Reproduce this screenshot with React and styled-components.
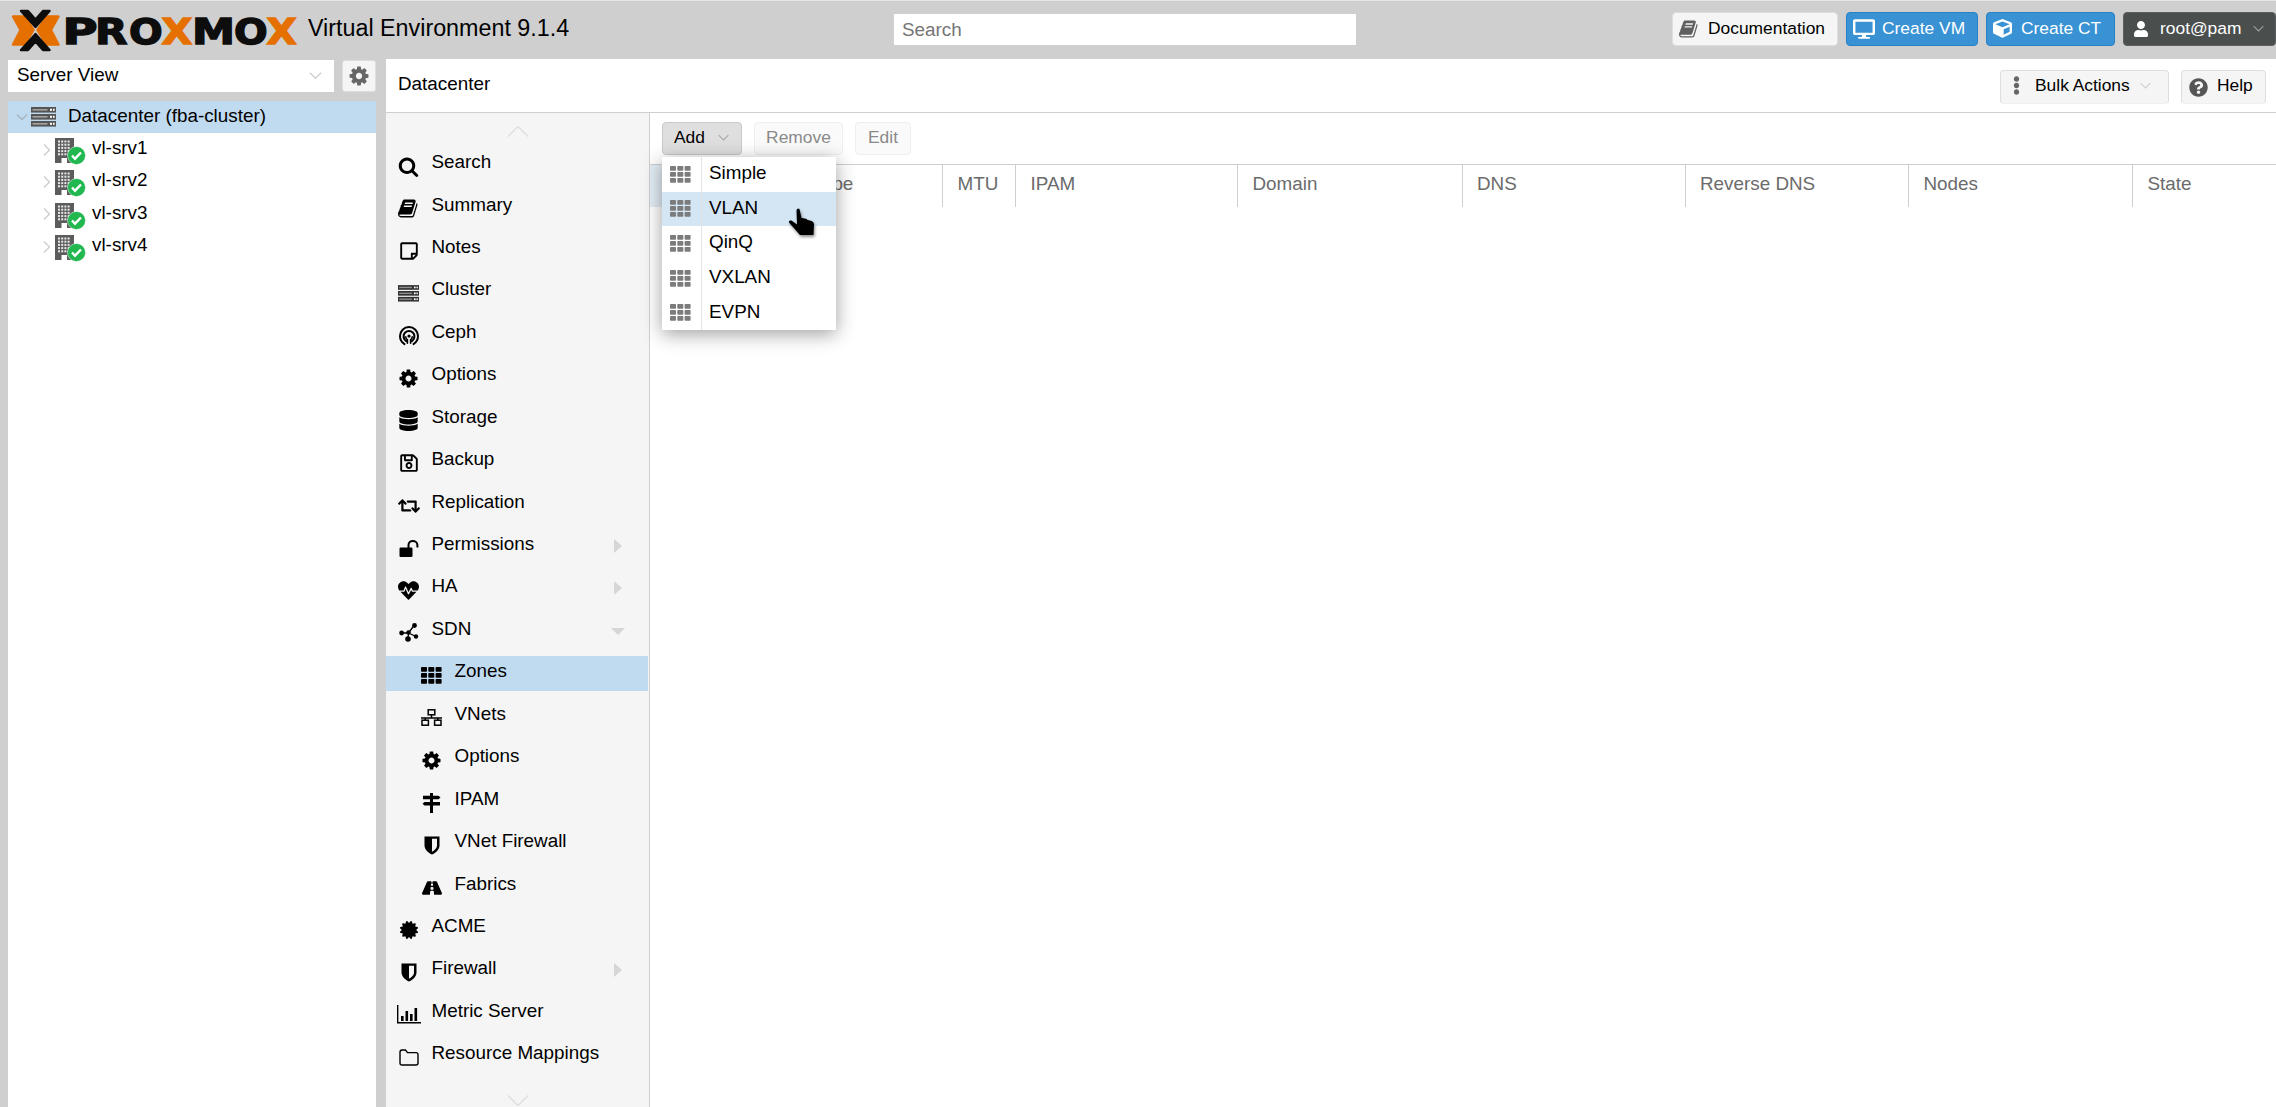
import React from "react";
import styled, { createGlobalStyle } from "styled-components";
import {
  FaRegStickyNote,
  FaDatabase,
  FaRegSave,
  FaRetweet,
  FaHeartbeat,
  FaRoad,
  FaCertificate,
  FaDesktop,
  FaCube,
  FaUser,
  FaQuestionCircle,
  FaEllipsisV,
} from "react-icons/fa";

const GlobalStyle = createGlobalStyle`
  html, body {
    margin: 0;
    padding: 0;
    height: 100%;
    overflow: hidden;
  }
  body {
    font-family: "Liberation Sans", Arial, sans-serif;
    font-size: 18.85px;
    color: #000;
  }
`;

const Page = styled.div`
  width: 100vw;
  height: 100vh;
  background: #cfcfcf;
  display: flex;
  flex-direction: column;
  overflow: hidden;
`;

/* top bar */
const TopBar = styled.header`
  height: 59px;
  flex: none;
  box-sizing: border-box;
  border-top: 1px solid #e6e6e6;
  display: flex;
  align-items: center;
  position: relative;
`;
const LogoSvg = styled.svg`
  width: 300px;
  height: 58px;
  flex: none;
  margin-top: -1px;
`;
const Title = styled.div`
  font-size: 23.3px;
  margin-left: 8px;
  width: 586px;
  flex: none;
  margin-top: -3px;
`;
const SearchBox = styled.div`
  width: 462px;
  height: 31px;
  flex: none;
  background: #fff;
  box-sizing: border-box;
  padding: 0 8px 0 8px;
  display: flex;
  align-items: center;
  color: #757575;
  font-size: 18.85px;
  margin-top: -2px;
  span {
    margin-top: 1px;
  }
`;
const TopActions = styled.div`
  margin-left: auto;
  display: flex;
  align-items: center;
  gap: 8px;
  margin-top: -3px;
`;
const TopButton = styled.div`
  height: 34px;
  box-sizing: border-box;
  width: ${(p) => p.$w}px;
  border-radius: 4px;
  border: 1px solid ${(p) => (p.$tone === "blue" ? "#2a80c4" : p.$tone === "dark" ? "#5b5f5f" : "#dedede")};
  background: ${(p) => (p.$tone === "blue" ? "#3892d4" : p.$tone === "dark" ? "#4a4f4e" : "#f5f5f5")};
  color: ${(p) => (p.$tone === "blue" || p.$tone === "dark" ? "#fff" : "#000")};
  font-size: 17.4px;
  display: flex;
  align-items: center;
  gap: ${(p) => p.$gap ?? 9}px;
  padding-left: 6px;
  white-space: nowrap;
  svg {
    flex: none;
  }
`;

/* main columns */
const Body = styled.div`
  flex: 1;
  min-height: 0;
  display: flex;
  padding-left: 8px;
  gap: 10px;
`;
const Sidebar = styled.aside`
  width: 368px;
  flex: none;
  display: flex;
  flex-direction: column;
  padding-top: 1px;
  gap: 9px;
`;
const ViewRow = styled.div`
  display: flex;
  gap: 8px;
  height: 32px;
  flex: none;
`;
const ViewSelect = styled.div`
  flex: 1;
  background: #fff;
  display: flex;
  align-items: center;
  justify-content: space-between;
  padding: 0 11px 2px 9px;
  font-size: 18.85px;
`;
const GearButton = styled.div`
  width: 34px;
  box-sizing: border-box;
  background: #f5f5f5;
  border: 1px solid #dedede;
  border-radius: 3px;
  display: flex;
  align-items: center;
  justify-content: center;
  color: #666;
`;
const Tree = styled.div`
  flex: 1;
  background: #fff;
`;
const TreeRow = styled.div`
  height: 32.35px;
  display: flex;
  align-items: center;
  padding-left: ${(p) => (p.$root ? 8 : 33)}px;
  background: ${(p) => (p.$active ? "#c0dbf0" : "transparent")};
  white-space: nowrap;
`;
const TreeLabel = styled.span`
  margin-top: -3px;
`;
const TreeChevron = styled.svg`
  width: 12px;
  height: 12px;
  flex: none;
  color: ${(p) => (p.$root ? "#a3b4c1" : "#cdcdcd")};
`;
const TreeIconBox = styled.span`
  position: relative;
  display: block;
  flex: none;
  width: ${(p) => (p.$root ? 25 : 20)}px;
  margin: ${(p) => (p.$root ? "0 12px 0 3px" : "2px 17px 0 2px")};
  line-height: 0;
`;
const StatusBadge = styled.svg`
  position: absolute;
  left: 12px;
  top: 8px;
  width: 19px;
  height: 19px;
`;

const Main = styled.main`
  flex: 1;
  min-width: 0;
  background: #fff;
  display: flex;
  flex-direction: column;
`;
const PanelHeader = styled.div`
  height: 54px;
  flex: none;
  box-sizing: border-box;
  border-bottom: 1px solid #cfcfcf;
  display: flex;
  align-items: center;
  padding: 0 10px 0 12px;
`;
const HeaderTitle = styled.div`
  flex: 1;
  margin-top: -4px;
`;
const HeaderButton = styled.div`
  height: 34px;
  width: ${(p) => p.$w}px;
  box-sizing: border-box;
  background: #f5f5f5;
  border: 1px solid #dedede;
  border-bottom-color: #f0f0f0;
  border-radius: 4px;
  margin-left: ${(p) => p.$ml ?? 0}px;
  margin-top: 2px;
  font-size: 17.4px;
  display: flex;
  align-items: center;
  padding: 0 0 3px ${(p) => p.$pl}px;
  gap: ${(p) => p.$gap}px;
  white-space: nowrap;
`;

const Columns = styled.div`
  flex: 1;
  min-height: 0;
  display: flex;
`;
const Nav = styled.nav`
  width: 264px;
  flex: none;
  box-sizing: border-box;
  background: #f5f5f5;
  border-right: 1px solid #cfcfcf;
  padding-top: 13px;
  overflow: hidden;
  display: flex;
  flex-direction: column;
  position: relative;
`;
const NavScroll = styled.svg`
  width: 22px;
  height: 11px;
  flex: none;
  align-self: center;
  color: #dedede;
  margin: ${(p) => p.$m};
`;
const NavItem = styled.div`
  height: 35px;
  flex: none;
  margin-bottom: 7.45px;
  margin-right: 1px;
  display: flex;
  align-items: center;
  padding-left: ${(p) => (p.$sub ? 34 : 11)}px;
  background: ${(p) => (p.$active ? "#c0dbf0" : "transparent")};
  white-space: nowrap;
`;
const NavIcon = styled.span`
  width: 27px;
  height: 24px;
  flex: none;
  margin-top: 4px;
  margin-right: 9.5px;
  display: flex;
  align-items: center;
  justify-content: center;
  color: #000;
  margin-left: -2px;
`;
const NavLabel = styled.span`
  flex: 1;
  margin-top: -4px;
`;
const Expander = styled.svg`
  width: 13px;
  height: 16px;
  flex: none;
  margin-right: 23px;
  color: #d6d6d6;
`;

const Content = styled.section`
  flex: 1;
  min-width: 0;
  display: flex;
  flex-direction: column;
  position: relative;
`;
const Toolbar = styled.div`
  height: 52px;
  flex: none;
  box-sizing: border-box;
  border-bottom: 1px solid #cfcfcf;
  padding: 9px 12px 0;
  display: flex;
  gap: 12px;
`;
const ToolButton = styled.div`
  height: 33px;
  box-sizing: border-box;
  width: ${(p) => p.$w}px;
  border-radius: 4px;
  border: 1px solid ${(p) => (p.$pressed ? "#c9c9c9" : "#eeeeee")};
  background: ${(p) => (p.$pressed ? "#dfdfdf" : "#fafafa")};
  color: ${(p) => (p.$pressed ? "#000" : "#8a8a8a")};
  font-size: 17.4px;
  display: flex;
  align-items: center;
  justify-content: ${(p) => (p.$pressed ? "flex-start" : "center")};
  padding: 0 0 2px ${(p) => (p.$pressed ? 11 : 0)}px;
  gap: 12px;
`;
const TableHead = styled.div`
  display: grid;
  grid-template-columns: 147px 145px 73px 222px 224.5px 223px 223.5px 224px 1fr;
  height: 42px;
  flex: none;
`;
const HeadCell = styled.div`
  box-sizing: border-box;
  border-left: ${(p) => (p.$first ? "none" : "1px solid #cfcfcf")};
  background: ${(p) => (p.$first ? "#e4eef6" : "#fff")};
  color: #6b6b6b;
  padding-left: 14.5px;
  display: flex;
  align-items: center;
  padding-bottom: 5px;
`;

/* dropdown + pointer, both float over the grid */
const Menu = styled.div`
  position: absolute;
  left: 12px;
  top: 44px;
  width: 174px;
  background: #fff;
  box-shadow: 0 4px 18px rgba(0, 0, 0, 0.38);
  display: flex;
  flex-direction: column;
`;
const MenuItem = styled.div`
  height: 34.6px;
  display: flex;
  align-items: center;
  background: ${(p) => (p.$hover ? "#d4e6f4" : "transparent")};
`;
const MenuIcon = styled.span`
  width: 40px;
  height: 100%;
  box-sizing: border-box;
  border-right: 1px solid #e4e4e4;
  flex: none;
  display: flex;
  align-items: center;
  justify-content: center;
  padding-right: 2px;
`;
const MenuLabel = styled.span`
  padding-left: 7px;
  margin-top: -2px;
`;
const Pointer = styled.svg`
  position: absolute;
  left: 137px;
  top: 93px;
  width: 30px;
  height: 33px;
  filter: drop-shadow(1px 2px 1.5px rgba(0, 0, 0, 0.45));
`;

/* drawn icons */
const Fa4 = ({ d, size = 19, color = "currentColor" }) => (
  <svg width={size} height={size} viewBox="0 0 1792 1792" fill={color}>
    <path d={d} />
  </svg>
);
const SEARCH =
  "M1216 832q0-185-131.5-316.5t-316.5-131.5-316.5 131.5-131.5 316.5 131.5 316.5 316.5 131.5 316.5-131.5 131.5-316.5zm512 832q0 52-38 90t-90 38q-54 0-90-38l-343-342q-179 124-399 124-143 0-273.5-55.5t-225-150-150-225-55.5-273.5 55.5-273.5 150-225 225-150 273.5-55.5 273.5 55.5 225 150 150 225 55.5 273.5q0 220-124 399l343 343q37 37 37 90z";
const GEAR =
  "M1152 896q0-106-75-181t-181-75-181 75-75 181 75 181 181 75 181-75 75-181zm512-109v222q0 12-8 23t-20 13l-185 28q-19 54-39 91 35 50 107 138 10 12 10 25t-9 23q-27 37-99 108t-94 71q-12 0-26-9l-138-108q-44 23-91 38-16 136-29 186-7 28-36 28h-222q-14 0-24.5-8.5t-11.5-21.5l-28-184q-49-16-90-37l-141 107q-10 9-25 9-14 0-25-11-126-114-165-168-7-10-7-23 0-12 8-23 15-21 51-66.5t54-70.5q-27-50-41-99l-183-27q-13-2-21-12.5t-8-23.5v-222q0-12 8-23t19-13l186-28q14-46 39-92-40-57-107-138-10-12-10-24 0-10 9-23 26-36 98.5-107.5t94.5-71.5q13 0 26 10l138 107q44-23 91-38 16-136 29-186 7-28 36-28h222q14 0 24.5 8.5t11.5 21.5l28 184q49 16 90 37l142-107q9-9 24-9 13 0 25 10 129 119 165 170 7 8 7 22 0 12-8 23-15 21-51 66.5t-54 70.5q26 50 41 98l183 28q13 2 21 12.5t8 23.5z";
const BOOK =
  "M1639 478q40 57 18 129l-275 906q-19 64-76.5 107.5t-122.5 43.5h-923q-77 0-148.5-53.5t-99.5-131.5q-24-67-2-127 0-4 3-27t4-37q1-8-3-21.5t-3-19.5q2-11 8-21t16.5-23.5 16.5-23.5q23-38 45-91.5t30-91.5q3-10 .5-30t-.5-28q3-11 17-28t17-23q21-36 42-92t25-90q1-9-2.5-32t.5-28q4-13 22-30.5t22-22.5q19-26 42.5-84.5t27.5-96.5q1-8-3-25.5t-2-26.5q2-8 9-18t18-23 17-21q8-12 16.5-30.5t15-35 16-36 19.5-32 26.5-23.5 36-11.5 47.5 5.5l-1 3q38-9 51-9h761q74 0 114 56t18 130l-274 906q-36 119-71.5 153.5t-128.5 34.5h-869q-27 0-38 15-11 16-1 43 24 70 144 70h923q29 0 56-15.5t35-41.5l300-987q7-22 5-57 38 15 59 43zm-1064 2q-4 13 2 22.5t20 9.5h608q13 0 25.5-9.5t16.5-22.5l21-64q4-13-2-22.5t-20-9.5h-608q-13 0-25.5 9.5t-16.5 22.5zm-83 256q-4 13 2 22.5t20 9.5h608q13 0 25.5-9.5t16.5-22.5l21-64q4-13-2-22.5t-20-9.5h-608q-13 0-25.5 9.5t-16.5 22.5z";

const ChevronDown = ({ size = 16, color = "#cfcfcf" }) => (
  <svg width={size} height={size} viewBox="0 0 16 16" fill="none" stroke={color} strokeWidth="1.4">
    <path d="M2 5l6 6 6-6" />
  </svg>
);

const ThGrid = ({ color = "#000", w = 21, h = 17 }) => (
  <svg width={w} height={h} viewBox="0 0 21 17" fill={color}>
    {[0, 1, 2].flatMap((r) =>
      [0, 1, 2].map((c) => <rect key={`${r}${c}`} x={c * 7.3} y={r * 6} width="6" height="4.8" rx="0.8" />)
    )}
  </svg>
);

const ServerStack = ({ w = 25, h = 20, color = "#555" }) => (
  <svg width={w} height={h} viewBox="0 0 25 20">
    {[0, 7, 14].map((y) => (
      <g key={y}>
        <rect y={y} width="25" height="5.6" fill={color} />
        <rect x="1.5" y={y + 2} width="15" height="1.6" fill="#fff" opacity="0.45" />
        <rect x="19" y={y + 1.8} width="2" height="2" fill="#fff" />
        <rect x="22" y={y + 1.8} width="1.6" height="2" fill="#fff" />
      </g>
    ))}
  </svg>
);

const Building = () => (
  <svg width="20" height="25" viewBox="0 0 20 25">
    <rect width="19" height="25" fill="#5c5c5c" />
    {[0, 1, 2, 3, 4].flatMap((r) =>
      [0, 1, 2, 3].map((c) => (
        <rect key={`${r}${c}`} x={3 + c * 3.2} y={2.5 + r * 3.2} width="2" height="2" fill="#e8e8e8" />
      ))
    )}
    <rect x="6.5" y="20" width="5.5" height="5" fill="#fff" />
  </svg>
);

const CephIcon = () => (
  <svg width="20" height="21" viewBox="0 0 20 20" fill="none" stroke="#000" strokeWidth="2" strokeLinecap="round">
    <path d="M5.5 18.6C2.7 17 1 14 1 10.6 1 5.6 5 1.6 10 1.6s9 4 9 9c0 3.4-1.7 6.4-4.5 8" />
    <path d="M7.2 15.6C5.6 14.6 4.6 12.8 4.6 10.8c0-3 2.4-5.4 5.4-5.4s5.4 2.4 5.4 5.4c0 2-1 3.8-2.6 4.8" />
    <path d="M8.4 17.8v-3.6c-1-.5-1.6-1.6-1.6-2.8" strokeWidth="1.6" />
    <path d="M11.6 17.8v-3.6c1-.5 1.6-1.6 1.6-2.8" strokeWidth="1.6" />
    <circle cx="10" cy="10.6" r="1.6" fill="#000" stroke="none" />
  </svg>
);

const SdnIcon = () => (
  <svg width="20" height="19" viewBox="0 0 20 19" fill="#000" stroke="#000">
    <path d="M9.5 10L15 2.5M9.5 10L2.5 10M9.5 10L9 16M9.5 10L17 13.5" strokeWidth="1.3" />
    <circle cx="15.5" cy="2.5" r="2.4" stroke="none" />
    <circle cx="2.6" cy="10" r="2.4" stroke="none" />
    <circle cx="9" cy="16" r="2.8" stroke="none" />
    <circle cx="17" cy="13.5" r="2.2" stroke="none" />
    <circle cx="9.5" cy="9.5" r="2.2" stroke="none" />
  </svg>
);

const ShieldIcon = () => (
  <svg width="16" height="19" viewBox="0 0 16 19">
    <path d="M0.5 0.5H15.5V9.5C15.5 14 11 17 8 18.6 5 17 0.5 14 0.5 9.5Z" fill="#000" />
    <path d="M8 2.8H13V9.5C13 12.4 10 14.5 8 15.7Z" fill="#f5f5f5" />
  </svg>
);

const UnlockIcon = () => (
  <svg width="20" height="17" viewBox="0 0 20 17">
    <rect x="0.5" y="7.5" width="13" height="9.5" rx="1.2" fill="#000" />
    <path d="M9.5 8V5C9.5 2.6 11.5 1 13.8 1S18.4 2.6 18.4 5V7.5" fill="none" stroke="#000" strokeWidth="2" />
  </svg>
);

const NetTreeIcon = () => (
  <svg width="21" height="17" viewBox="0 0 21 17" fill="none" stroke="#000" strokeWidth="1.5">
    <rect x="7.2" y="0.8" width="6.6" height="5" />
    <path d="M10.5 6v3M0 9H21" />
    <rect x="1" y="11.2" width="6.4" height="5" />
    <rect x="13.6" y="11.2" width="6.4" height="5" />
    <path d="M4.2 9v2.2M16.8 9v2.2" />
  </svg>
);

const SignPostIcon = () => (
  <svg width="19" height="20" viewBox="0 0 19 20" fill="#000">
    <rect x="8" y="0" width="3" height="20" />
    <path d="M1 2.8H16.5L18.5 4.5 16.5 6.2H1Z" />
    <path d="M18 9H2.5L0.5 10.7 2.5 12.4H18Z" />
  </svg>
);

const FolderIcon = () => (
  <svg width="20" height="17" viewBox="0 0 20 17" fill="none" stroke="#000" strokeWidth="1.4">
    <path d="M1 3.2Q1 1 3 1H6.5L8.5 3.6H17Q19 3.6 19 5.6V14Q19 16 17 16H3Q1 16 1 14Z" />
  </svg>
);

const ServersIcon = () => <ServerStack w={21} h={17} color="#333" />;

const MetricIcon = () => (
  <svg width="24" height="19" viewBox="0 0 24 19" fill="#000">
    <path d="M0 0h1.4v17H24v1.4H0z" />
    <rect x="4" y="11" width="2.6" height="5" />
    <rect x="8.5" y="6" width="2.6" height="10" />
    <rect x="13" y="9" width="2.6" height="7" />
    <rect x="17.5" y="3" width="2.6" height="13" />
  </svg>
);

/* wordmark letters stay real text, scaled to the logo's wide proportions */
const LETTERS = [
  ["P", 62.6, 1.33, "#0d0d0d"],
  ["R", 95, 1.17, "#0d0d0d"],
  ["O", 129, 1.1, "#0d0d0d"],
  ["X", 161.5, 1.11, "#e57000"],
  ["M", 192, 1.2, "#0d0d0d"],
  ["O", 234, 1.1, "#0d0d0d"],
  ["X", 266.5, 1.09, "#e57000"],
];

const Logo = () => (
  <LogoSvg viewBox="0 0 300 58">
    <g strokeLinejoin="round" strokeWidth="2.4">
      <path d="M13 15.5H25L33.5 29 25 43.5H13L20.5 29Z" fill="#e57000" stroke="#e57000" />
      <path d="M58.5 15.5H46.5L37.5 29 46.5 43.5H58.5L51 29Z" fill="#e57000" stroke="#e57000" />
      <path d="M21 10H28L35.5 18.5 43 10H49.5L35.5 26Z" fill="#0d0d0d" stroke="#0d0d0d" />
      <path d="M21 49H28L35.5 40.5 43 49H49.5L35.5 33Z" fill="#0d0d0d" stroke="#0d0d0d" />
    </g>
    {LETTERS.map(([ch, x, sx, color], i) => (
      <text
        key={i}
        transform={`translate(${x} 42.5) scale(${sx} 1)`}
        fontFamily="'DejaVu Sans', sans-serif"
        fontWeight="700"
        fontSize="36"
        fill={color}
        stroke={color}
        strokeWidth="1.4"
      >
        {ch}
      </text>
    ))}
  </LogoSvg>
);

const NAV = [
  { label: "Search", icon: <Fa4 d={SEARCH} size={21} /> },
  { label: "Summary", icon: <Fa4 d={BOOK} size={21} /> },
  { label: "Notes", icon: <FaRegStickyNote size={20} /> },
  { label: "Cluster", icon: <ServersIcon /> },
  { label: "Ceph", icon: <CephIcon /> },
  { label: "Options", icon: <Fa4 d={GEAR} size={21} /> },
  { label: "Storage", icon: <FaDatabase size={21} /> },
  { label: "Backup", icon: <FaRegSave size={20} /> },
  { label: "Replication", icon: <FaRetweet size={22} /> },
  { label: "Permissions", icon: <UnlockIcon />, exp: "right" },
  { label: "HA", icon: <FaHeartbeat size={21} />, exp: "right" },
  { label: "SDN", icon: <SdnIcon />, exp: "down" },
  { label: "Zones", icon: <ThGrid />, sub: true, active: true },
  { label: "VNets", icon: <NetTreeIcon />, sub: true },
  { label: "Options", icon: <Fa4 d={GEAR} size={21} />, sub: true },
  { label: "IPAM", icon: <SignPostIcon />, sub: true },
  { label: "VNet Firewall", icon: <ShieldIcon />, sub: true },
  { label: "Fabrics", icon: <FaRoad size={20} />, sub: true },
  { label: "ACME", icon: <FaCertificate size={18} /> },
  { label: "Firewall", icon: <ShieldIcon />, exp: "right" },
  { label: "Metric Server", icon: <MetricIcon /> },
  { label: "Resource Mappings", icon: <FolderIcon /> },
];

const COLUMNS = ["ID", "Type", "MTU", "IPAM", "Domain", "DNS", "Reverse DNS", "Nodes", "State"];
const ZONES = ["Simple", "VLAN", "QinQ", "VXLAN", "EVPN"];
const NODES = ["vl-srv1", "vl-srv2", "vl-srv3", "vl-srv4"];

export default function App() {
  return (
    <Page>
      <GlobalStyle />
      <TopBar>
        <Logo />
        <Title>Virtual Environment 9.1.4</Title>
        <SearchBox>
          <span>Search</span>
        </SearchBox>
        <TopActions>
          <TopButton $w={166}>
            <Fa4 d={BOOK} size={20} color="#5f5f5f" />
            Documentation
          </TopButton>
          <TopButton $w={132} $tone="blue" $gap={7}>
            <FaDesktop size={22} />
            Create VM
          </TopButton>
          <TopButton $w={129} $tone="blue" $gap={9}>
            <FaCube size={19} />
            Create CT
          </TopButton>
          <TopButton $w={153} $tone="dark" $gap={11}>
            <FaUser size={16} style={{ marginLeft: 3 }} />
            root@pam
            <ChevronDown size={13} color="#9a9e9d" />
          </TopButton>
        </TopActions>
      </TopBar>
      <Body>
        <Sidebar>
          <ViewRow>
            <ViewSelect>
              Server View
              <ChevronDown size={15} />
            </ViewSelect>
            <GearButton>
              <Fa4 d={GEAR} size={22} />
            </GearButton>
          </ViewRow>
          <Tree>
            <TreeRow $root $active>
              <TreeChevron $root viewBox="0 0 12 12" fill="none" stroke="currentColor" strokeWidth="1.3">
                <path d="M1 3.5l5 5 5-5" />
              </TreeChevron>
              <TreeIconBox $root>
                <ServerStack />
              </TreeIconBox>
              <TreeLabel>Datacenter (fba-cluster)</TreeLabel>
            </TreeRow>
            {NODES.map((name) => (
              <TreeRow key={name}>
                <TreeChevron viewBox="0 0 12 12" fill="none" stroke="currentColor" strokeWidth="1.3">
                  <path d="M3 0.5l5.5 5.5-5.5 5.5" />
                </TreeChevron>
                <TreeIconBox>
                  <Building />
                  <StatusBadge viewBox="0 0 19 19">
                    <circle cx="9.5" cy="9.5" r="9" fill="#21b84f" stroke="#fff" strokeWidth="0.5" />
                    <path d="M5 9.5l3 3.2 6-6.2" fill="none" stroke="#fff" strokeWidth="2.4" />
                  </StatusBadge>
                </TreeIconBox>
                <TreeLabel>{name}</TreeLabel>
              </TreeRow>
            ))}
          </Tree>
        </Sidebar>
        <Main>
          <PanelHeader>
            <HeaderTitle>Datacenter</HeaderTitle>
            <HeaderButton $w={169} $pl={6} $gap={9}>
              <FaEllipsisV size={19} color="#666" />
              Bulk Actions
              <ChevronDown size={13} />
            </HeaderButton>
            <HeaderButton $w={85} $ml={12} $pl={7} $gap={9}>
              <FaQuestionCircle size={19} color="#555" style={{ marginTop: 4 }} />
              Help
            </HeaderButton>
          </PanelHeader>
          <Columns>
            <Nav>
              <NavScroll viewBox="0 0 22 11" fill="none" stroke="currentColor" strokeWidth="1.4" $m="0 0 9.6px">
                <path d="M1 10.5l10-10 10 10" />
              </NavScroll>
              {NAV.map((item, i) => (
                <NavItem key={i} $sub={item.sub} $active={item.active}>
                  <NavIcon>{item.icon}</NavIcon>
                  <NavLabel>{item.label}</NavLabel>
                  {item.exp === "right" && (
                    <Expander viewBox="0 0 13 16" fill="currentColor">
                      <path d="M2 1l8 7-8 7z" />
                    </Expander>
                  )}
                  {item.exp === "down" && (
                    <Expander viewBox="0 0 13 16" fill="currentColor" style={{ overflow: "visible" }}>
                      <path d="M-1 5h14l-7 7z" />
                    </Expander>
                  )}
                </NavItem>
              ))}
              <NavScroll viewBox="0 0 22 11" fill="none" stroke="currentColor" strokeWidth="1.4" $m="15px 0 0">
                <path d="M1 0.5l10 10 10-10" />
              </NavScroll>
            </Nav>
            <Content>
              <Toolbar>
                <ToolButton $w={80} $pressed>
                  Add
                  <ChevronDown size={13} color="#a9a9a9" />
                </ToolButton>
                <ToolButton $w={89}>Remove</ToolButton>
                <ToolButton $w={56}>Edit</ToolButton>
              </Toolbar>
              <TableHead>
                {COLUMNS.map((c, i) => (
                  <HeadCell key={c} $first={i === 0}>
                    {c}
                  </HeadCell>
                ))}
              </TableHead>
              <Menu>
                {ZONES.map((z) => (
                  <MenuItem key={z} $hover={z === "VLAN"}>
                    <MenuIcon>
                      <ThGrid color="#7c7c7c" />
                    </MenuIcon>
                    <MenuLabel>{z}</MenuLabel>
                  </MenuItem>
                ))}
              </Menu>
              <Pointer viewBox="0 0 30 33">
                <path
                  d="M9.5 4Q10.5 1.5 12.5 3L14.5 12 18 12.5Q20 12.5 20.5 14L23 14.5Q26.5 15 27 18L26.5 29 13 29 2 16.5Q1.5 14 4.5 14.5L10 18.5Z"
                  fill="#000"
                />
              </Pointer>
            </Content>
          </Columns>
        </Main>
      </Body>
    </Page>
  );
}
